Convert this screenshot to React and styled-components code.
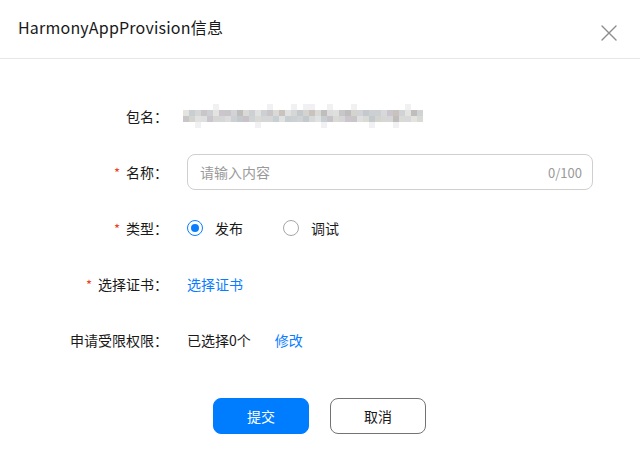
import React from "react";
import styled, { createGlobalStyle } from "styled-components";

const Global = createGlobalStyle`
  html, body { margin: 0; padding: 0; background: #fff; }
  body { font-family: "Noto Sans CJK SC", "Noto Sans", sans-serif; color: #191919; }
  * { box-sizing: border-box; }
`;

const Dialog = styled.div`
  width: 640px;
  height: 465px;
  background: #fff;
  display: flex;
  flex-direction: column;
`;

const Header = styled.div`
  height: 59px;
  border-bottom: 1px solid #e6e6e6;
  display: flex;
  align-items: center;
  justify-content: space-between;
  padding: 0 22px 0 18px;
`;

const Title = styled.div`
  font-size: 16px;
  color: #191919;
  margin-top: -4px;
  letter-spacing: 0.2px;
`;

const CloseBtn = styled.button`
  border: none;
  background: none;
  padding: 0;
  width: 18px;
  height: 18px;
  margin-top: 8px;
  cursor: pointer;
  display: flex;
`;

const Form = styled.div`
  display: flex;
  flex-direction: column;
  gap: 20px;
  padding-top: 39px;
`;

const Row = styled.div`
  display: grid;
  grid-template-columns: 168px 1fr;
  column-gap: 19px;
  align-items: center;
  height: 36px;
  padding-right: 47px;
`;

const Label = styled.div`
  font-size: 14px;
  text-align: right;
  color: #191919;
  white-space: nowrap;
`;

const Star = styled.span`
  color: #e84026;
  margin-right: 6px;
  font-size: 13px;
`;

const Value = styled.div`
  display: flex;
  align-items: center;
  font-size: 14px;
  color: #191919;
`;

const Mosaic = styled.div`
  display: grid;
  grid-template-columns: repeat(40, 6px);
  grid-auto-rows: 6px;
  margin-left: -4px;
`;

const Cell = styled.div`
  background: ${(p) => p.$c};
`;

const InputBox = styled.div`
  width: 100%;
  height: 36px;
  border: 1px solid #cfcfcf;
  border-radius: 8px;
  display: flex;
  align-items: center;
  justify-content: space-between;
  padding: 0 10px 0 12px;
`;

const Placeholder = styled.span`
  font-size: 14px;
  color: #9a9a9a;
`;

const Count = styled.span`
  font-size: 13px;
  color: #9a9a9a;
`;

const RadioGroup = styled.div`
  display: flex;
  align-items: center;
  gap: 40px;
`;

const RadioItem = styled.label`
  display: flex;
  align-items: center;
  gap: 12px;
  font-size: 14px;
  color: #191919;
`;

const RadioCircle = styled.span`
  width: 16px;
  height: 16px;
  border-radius: 50%;
  border: 1px solid ${(p) => (p.$checked ? "#0a7dff" : "#a6a6a6")};
  display: flex;
  align-items: center;
  justify-content: center;
  &::after {
    content: "";
    width: 8px;
    height: 8px;
    border-radius: 50%;
    background: ${(p) => (p.$checked ? "#0a7dff" : "transparent")};
  }
`;

const Link = styled.a`
  color: #0a7dff;
  font-size: 14px;
  text-decoration: none;
  margin-left: ${(p) => p.$ml || 0}px;
  cursor: pointer;
`;

const Footer = styled.div`
  display: flex;
  justify-content: center;
  gap: 21px;
  margin-top: 40px;
  padding-right: 1px;
`;

const Button = styled.button`
  width: 96px;
  height: 36px;
  border-radius: 8px;
  font-family: inherit;
  font-size: 14px;
  cursor: pointer;
  border: 1px solid ${(p) => (p.$primary ? "#007dff" : "#737373")};
  background: ${(p) => (p.$primary ? "#007dff" : "#fff")};
  color: ${(p) => (p.$primary ? "#fff" : "#191919")};
`;

const palette = [
  "#d7d8da", "#c9c6ca", "#dcdcdc", "#c7c3c9", "#cfd3d6", "#c9c2bd",
  "#e0e1e1", "#d3d2d6", "#cdd0d2", "#d4d4cf", "#c3c9cd", "#d6d6d6",
  "#dde0de", "#cbc6cd", "#e4e3df", "#c7cfd3", "#d9d9d6", "#c0bdbd",
];

function seeded(i) {
  const x = Math.sin(i * 12.9898 + 78.233) * 43758.5453;
  return x - Math.floor(x);
}

const cells = [];
for (let r = 0; r < 4; r++) {
  for (let c = 0; c < 40; c++) {
    const v = seeded(r * 40 + c);
    let color;
    if (r === 0 || r === 3) {
      color = v > 0.82 ? "#f1f1f3" : "#ffffff";
    } else {
      color = palette[Math.floor(v * palette.length)];
    }
    cells.push(color);
  }
}

function CloseIcon() {
  return (
    <svg width="18" height="18" viewBox="0 0 18 18">
      <path d="M2 2 L16 16 M16 2 L2 16" stroke="#8c8c8c" strokeWidth="1.4" strokeLinecap="round" />
    </svg>
  );
}

export default function App() {
  return (
    <>
      <Global />
      <Dialog>
        <Header>
          <Title>HarmonyAppProvision信息</Title>
          <CloseBtn aria-label="close">
            <CloseIcon />
          </CloseBtn>
        </Header>
        <Form>
          <Row>
            <Label>包名：</Label>
            <Value>
              <Mosaic>
                {cells.map((c, i) => (
                  <Cell key={i} $c={c} />
                ))}
              </Mosaic>
            </Value>
          </Row>
          <Row>
            <Label>
              <Star>*</Star>名称：
            </Label>
            <Value>
              <InputBox>
                <Placeholder>请输入内容</Placeholder>
                <Count>0/100</Count>
              </InputBox>
            </Value>
          </Row>
          <Row>
            <Label>
              <Star>*</Star>类型：
            </Label>
            <Value>
              <RadioGroup>
                <RadioItem>
                  <RadioCircle $checked />
                  发布
                </RadioItem>
                <RadioItem>
                  <RadioCircle />
                  调试
                </RadioItem>
              </RadioGroup>
            </Value>
          </Row>
          <Row>
            <Label>
              <Star>*</Star>选择证书：
            </Label>
            <Value>
              <Link>选择证书</Link>
            </Value>
          </Row>
          <Row>
            <Label>申请受限权限：</Label>
            <Value>
              已选择0个
              <Link $ml={24}>修改</Link>
            </Value>
          </Row>
        </Form>
        <Footer>
          <Button $primary>提交</Button>
          <Button>取消</Button>
        </Footer>
      </Dialog>
    </>
  );
}
